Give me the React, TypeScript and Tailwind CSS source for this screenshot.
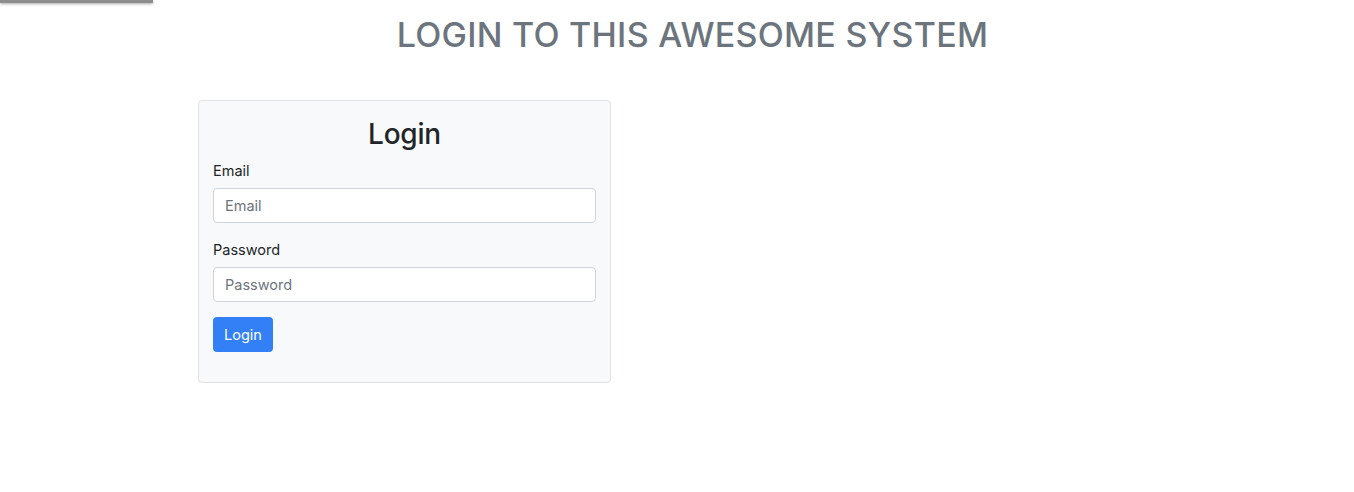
export default function App() {
  return (
    <div className="relative min-h-[492px] bg-white font-['Inter','Liberation_Sans',sans-serif] text-[#212529]">
      {/* scrolled-off window edge at the very top */}
      <div className="absolute left-0 top-0 h-[3px] w-[153px] bg-[#8d8d8d] shadow-[0_1px_3px_rgba(0,0,0,0.35)]" />

      <h1 className="pt-[14px] pl-[31px] text-center text-[34px] font-medium leading-[41px] tracking-[0.25px] text-[#6c757d]">
        LOGIN TO THIS AWESOME SYSTEM
      </h1>

      <div className="mt-[45px] ml-[198px] w-[413px] rounded-[4px] border border-[#dfe1e4] bg-[#f8f9fa] px-[14px] pt-[16px] pb-[30px]">
        <h2 className="mb-[9px] text-center text-[28px] font-medium leading-[34px] tracking-[-0.2px] text-[#212529]">
          Login
        </h2>

        <form className="flex flex-col" onSubmit={(e) => e.preventDefault()}>
          <label className="mb-[7px] text-[14.5px] leading-[21px]">Email</label>
          <input
            type="email"
            placeholder="Email"
            className="h-[35px] w-full rounded-[4px] border border-[#ced4da] bg-white px-[11px] text-[14.5px] text-[#495057] placeholder:text-[#6c757d] outline-none"
          />

          <label className="mt-[16px] mb-[7px] text-[14.5px] leading-[21px]">Password</label>
          <input
            type="password"
            placeholder="Password"
            className="h-[35px] w-full rounded-[4px] border border-[#ced4da] bg-white px-[11px] text-[14.5px] text-[#495057] placeholder:text-[#6c757d] outline-none"
          />

          <div className="mt-[15px]">
            <button
              type="submit"
              className="h-[35px] w-[60px] rounded-[4px] bg-[#3380f6] text-[14.5px] text-white"
            >
              Login
            </button>
          </div>
        </form>
      </div>
    </div>
  );
}
